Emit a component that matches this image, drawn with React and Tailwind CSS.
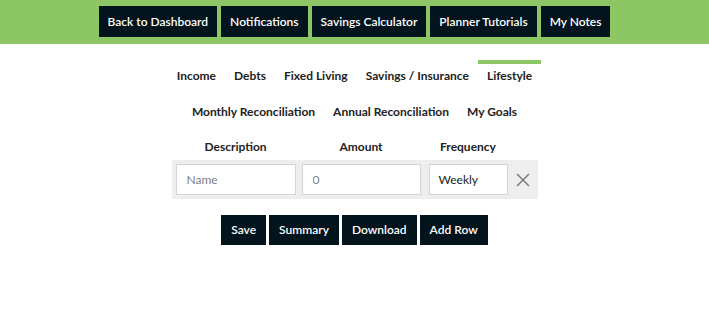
import React, { useState } from 'react';

const navItems = ['Back to Dashboard', 'Notifications', 'Savings Calculator', 'Planner Tutorials', 'My Notes'];
const tabsTop = ['Income', 'Debts', 'Fixed Living', 'Savings / Insurance', 'Lifestyle'];
const tabsBottom = ['Monthly Reconciliation', 'Annual Reconciliation', 'My Goals'];
const actions = ['Save', 'Summary', 'Download', 'Add Row'];

const Tab = ({ label, active, onClick }) => (
  <button
    onClick={onClick}
    className={`border-t-4 px-[9px] pt-[4px] pb-[12px] text-[12px] leading-[16px] font-bold text-[#222] ${
      active ? 'border-[#8cc665]' : 'border-transparent'
    }`}
  >
    {label}
  </button>
);

export default function App() {
  const [active, setActive] = useState('Lifestyle');
  const [name, setName] = useState('');
  const [amount, setAmount] = useState('');

  return (
    <div className="min-h-screen bg-white font-['Lato','Liberation_Sans',sans-serif]">
      <div className="h-[44px] bg-[#8cc665] flex justify-center gap-[4px] pt-[6px]">
        {navItems.map(item => (
          <button key={item} className="h-[31px] px-[9px] bg-[#03141c] text-white text-[12px] font-semibold">
            {item}
          </button>
        ))}
      </div>

      <div className="mt-[16px] flex justify-center">
        {tabsTop.map(t => (
          <Tab key={t} label={t} active={active === t} onClick={() => setActive(t)} />
        ))}
      </div>
      <div className="flex justify-center">
        {tabsBottom.map(t => (
          <Tab key={t} label={t} active={active === t} onClick={() => setActive(t)} />
        ))}
      </div>

      <div className="flex justify-center mt-[7px]">
        <div className="w-[366px]">
          <div className="flex pl-[4px] text-[12px] leading-[16px] font-bold text-[#222]">
            <div className="w-[120px] text-center">Description</div>
            <div className="w-[119px] ml-[6px] text-center">Amount</div>
            <div className="w-[79px] ml-[8px] text-center">Frequency</div>
          </div>
          <div className="mt-[5px] bg-[#eeeeee] flex items-center pl-[4px] py-[4px]">
            <input
              value={name}
              onChange={e => setName(e.target.value)}
              placeholder="Name"
              className="w-[120px] h-[31px] bg-white border border-[#d4d4d4] px-[10px] text-[12px] text-[#333] placeholder:text-[#808080] outline-none"
            />
            <input
              value={amount}
              onChange={e => setAmount(e.target.value)}
              placeholder="0"
              className="w-[119px] h-[31px] ml-[6px] bg-white border border-[#d4d4d4] px-[10px] text-[12px] text-[#333] placeholder:text-[#808080] outline-none"
            />
            <div className="w-[79px] h-[31px] ml-[8px] bg-white border border-[#d4d4d4] px-[9px] flex items-center text-[12px] text-[#222]">
              Weekly
            </div>
            <button className="w-[30px] flex justify-center items-center">
              <svg width="14" height="14" viewBox="0 0 14 14">
                <line x1="1" y1="1" x2="13" y2="13" stroke="#777" strokeWidth="1.4" />
                <line x1="13" y1="1" x2="1" y2="13" stroke="#777" strokeWidth="1.4" />
              </svg>
            </button>
          </div>
        </div>
      </div>

      <div className="mt-[16px] flex justify-center gap-[3px]">
        {actions.map(a => (
          <button key={a} className="h-[30px] px-[10px] bg-[#03141c] text-white text-[12px] font-semibold">
            {a}
          </button>
        ))}
      </div>
    </div>
  );
}
